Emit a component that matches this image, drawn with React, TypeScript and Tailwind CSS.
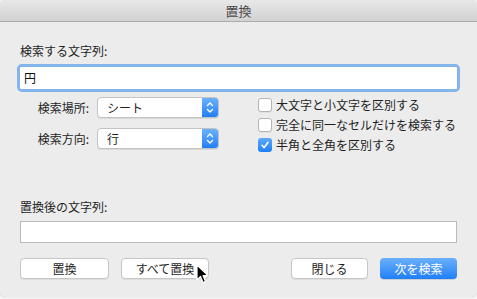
import React from "react";

const font = { fontFamily: '"Noto Sans CJK JP", "Noto Sans", sans-serif' };

function Popup({ value }: { value: string }) {
  return (
    <div className="flex h-[21px] w-[122px] rounded-[4px] border border-[#c3c3c3] bg-white shadow-[0_1px_0_rgba(0,0,0,0.08)] overflow-hidden">
      <div className="flex-1 pl-[9px] text-[12px] leading-[19px] text-[#1e1e1e]">{value}</div>
      <div className="flex w-[16px] items-center justify-center bg-gradient-to-b from-[#6ab1fb] to-[#1f7ef8]">
        <svg width="8" height="13" viewBox="0 0 8 13" fill="none" stroke="white" strokeWidth="1.4" strokeLinecap="round" strokeLinejoin="round">
          <path d="M1.5 4.5 L4 2 L6.5 4.5" />
          <path d="M1.5 8.5 L4 11 L6.5 8.5" />
        </svg>
      </div>
    </div>
  );
}

function Check({ checked, label }: { checked?: boolean; label: string }) {
  return (
    <div className="flex h-[20px] items-center">
      {checked ? (
        <div className="flex h-[14px] w-[14px] items-center justify-center rounded-[3px] bg-gradient-to-b from-[#5aa9fb] to-[#1e7ef8]">
          <svg width="10" height="10" viewBox="0 0 10 10" fill="none" stroke="white" strokeWidth="1.6" strokeLinecap="round" strokeLinejoin="round">
            <path d="M2 5.3 L4.2 7.6 L8 2.3" />
          </svg>
        </div>
      ) : (
        <div className="h-[14px] w-[14px] rounded-[3px] border border-[#b4b4b4] bg-white shadow-[0_1px_0_rgba(0,0,0,0.05)]" />
      )}
      <span className="ml-[4px] text-[12px] leading-[16px] text-[#1e1e1e]">{label}</span>
    </div>
  );
}

function Btn({ label, w, primary }: { label: string; w: string; primary?: boolean }) {
  return (
    <div
      className={
        primary
          ? `flex h-[21px] ${w} items-center justify-center rounded-[4px] bg-gradient-to-b from-[#69b0fb] to-[#1d7ef9] text-[12px] text-white shadow-[0_1px_0_rgba(0,0,0,0.12)]`
          : `flex h-[21px] ${w} items-center justify-center rounded-[4px] border border-[#c6c6c6] bg-white text-[12px] text-[#1e1e1e] shadow-[0_1px_0_rgba(0,0,0,0.06)]`
      }
    >
      {label}
    </div>
  );
}

export default function App() {
  return (
    <div className="h-[299px] w-[477px] bg-[#f4f4f4]" style={font}>
      <div className="relative flex h-[297px] w-[477px] flex-col overflow-hidden rounded-[5px] bg-[#ececec] shadow-[0_0_1px_rgba(0,0,0,0.25)]">
        <div className="flex h-[22px] shrink-0 items-center justify-center border-b border-[#acacac] bg-gradient-to-b from-[#e9e8e9] to-[#d3d2d3] text-[13px] text-[#4a4a4a]">
          置換
        </div>
        <div className="flex flex-col px-[20px]">
          <div className="mt-[21px] text-[12px] leading-[16px] text-[#1e1e1e]">検索する文字列:</div>
          <div className="mx-[-3px] mt-[5px] h-[28px] rounded-[5px] bg-[#83b5ec] p-[3px]">
            <div className="h-full w-full rounded-[1px] bg-white pl-[4px] text-[12px] leading-[22px] text-[#111]">円</div>
          </div>
          <div className="mt-[5px] flex">
            <div className="flex w-[236px] flex-col gap-[10px]">
              <div className="flex items-center">
                <span className="w-[69px] text-right text-[12px] text-[#1e1e1e]">検索場所:</span>
                <div className="ml-[8px]"><Popup value="シート" /></div>
              </div>
              <div className="flex items-center">
                <span className="w-[69px] text-right text-[12px] text-[#1e1e1e]">検索方向:</span>
                <div className="ml-[8px]"><Popup value="行" /></div>
              </div>
            </div>
            <div className="-mt-[2px] ml-[2px] flex flex-col">
              <Check label="大文字と小文字を区別する" />
              <Check label="完全に同一なセルだけを検索する" />
              <Check checked label="半角と全角を区別する" />
            </div>
          </div>
          <div className="mt-[44px] text-[12px] leading-[16px] text-[#1e1e1e]">置換後の文字列:</div>
          <div className="mt-[6px] h-[22px] border border-[#bababa] bg-white" />
          <div className="mt-[15px] flex">
            <Btn label="置換" w="w-[89px]" />
            <div className="ml-[12px]"><Btn label="すべて置換" w="w-[88px]" /></div>
            <div className="ml-auto"><Btn label="閉じる" w="w-[77px]" /></div>
            <div className="ml-[12px]"><Btn label="次を検索" w="w-[77px]" primary /></div>
          </div>
        </div>
        <svg className="absolute left-[196px] top-[264px]" width="13" height="20" viewBox="0 0 13 20">
          <path d="M1 1 L1 16 L4.5 12.5 L7 18.5 L9.5 17.5 L7 11.5 L12 11.5 Z" fill="black" stroke="white" strokeWidth="1.2" strokeLinejoin="round" />
        </svg>
      </div>
    </div>
  );
}
